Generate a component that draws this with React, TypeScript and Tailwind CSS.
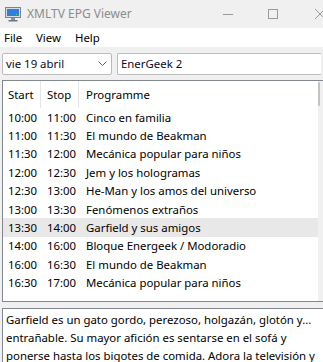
const rows = [
    ["10:00", "11:00", "Cinco en familia"],
    ["11:00", "11:30", "El mundo de Beakman"],
    ["11:30", "12:00", "Mecánica popular para niños"],
    ["12:00", "12:30", "Jem y los hologramas"],
    ["12:30", "13:00", "He-Man y los amos del universo"],
    ["13:00", "13:30", "Fenómenos extraños"],
    ["13:30", "14:00", "Garfield y sus amigos"],
    ["14:00", "16:00", "Bloque Energeek / Modoradio"],
    ["16:00", "16:30", "El mundo de Beakman"],
    ["16:30", "17:00", "Mecánica popular para niños"],
];

function MonitorIcon() {
    return (
        <svg width="16" height="16" viewBox="0 0 16 16">
            <rect x="0.5" y="1.5" width="15" height="10" fill="#d8dde3" stroke="#7a8591" />
            <rect x="2" y="3" width="12" height="7" fill="#2f7fe0" />
            <rect x="6" y="12" width="4" height="2" fill="#8a939c" />
            <rect x="3.5" y="14" width="9" height="1.5" fill="#6d7680" />
            <rect x="11" y="8" width="1" height="1" fill="#5fd35f" />
        </svg>
    );
}

export default function App() {
    const selected = 6;
    return (
        <div
            className="w-[323px] h-[362px] overflow-hidden bg-[#f0f0f0] text-[11.4px] text-black flex flex-col"
            style={{ fontFamily: '"Noto Sans", "Segoe UI", sans-serif' }}
        >
            {/* title bar */}
            <div className="h-[28px] flex items-center shrink-0">
                <div className="pl-[5px] pr-[6px] flex items-center">
                    <MonitorIcon />
                </div>
                <span className="text-[#8c8c8c] text-[12px]">XMLTV EPG Viewer</span>
                <div className="ml-auto mr-[-2px] flex items-center">
                    <div className="w-[10px] h-px bg-[#9a9a9a]" />
                    <div className="ml-[35px] w-[10px] h-[10px] border border-[#9a9a9a]" />
                    <svg className="ml-[37px]" width="10" height="10" viewBox="0 0 10 10">
                        <path d="M0 0 L10 10 M10 0 L0 10" stroke="#9a9a9a" strokeWidth="1" />
                    </svg>
                </div>
            </div>

            {/* menu */}
            <div className="h-[19px] bg-white flex items-center shrink-0">
                <span className="ml-[4px] w-[32px]">File</span>
                <span className="w-[39px]">View</span>
                <span>Help</span>
            </div>

            {/* combos */}
            <div className="flex gap-[5px] px-[2px] pt-[6px] pb-[5px] shrink-0">
                <div className="w-[110px] h-[22px] bg-white border border-[#bcbcbc] rounded-[2px] flex items-center pl-[3px] pr-[4px]">
                    <span className="text-[#0a0a28]">vie 19 abril</span>
                    <svg className="ml-auto" width="9" height="6" viewBox="0 0 9 6">
                        <path d="M0.5 0.5 L4.5 4.5 L8.5 0.5" fill="none" stroke="#606060" />
                    </svg>
                </div>
                <div className="flex-1 h-[22px] bg-white border border-[#bcbcbc] border-r-0 rounded-l-[2px] flex items-center pl-[3px]">
                    <span className="text-[#0a0a28]">EnerGeek 2</span>
                </div>
            </div>

            {/* list view */}
            <div className="ml-[2px] h-[222px] bg-white border border-[#828790] border-r-0 flex shrink-0">
                <div className="flex-1 flex flex-col">
                    <div className="h-[27px] flex items-center">
                        <div className="w-[38px] pl-[5px] h-full flex items-center border-r border-[#e5e5e5]">Start</div>
                        <div className="w-[38px] pl-[6px] h-full flex items-center border-r border-[#e5e5e5]">Stop</div>
                        <div className="pl-[7px]">Programme</div>
                    </div>
                    {rows.map((r, i) => (
                        <div
                            key={i}
                            className={`h-[18.4px] flex items-center ${i === selected ? "bg-[#e8e8e8]" : ""}`}
                        >
                            <div className="w-[38px] pl-[5px]">{r[0]}</div>
                            <div className="w-[38px] pl-[6px]">{r[1]}</div>
                            <div className="pl-[7px] whitespace-nowrap">{r[2]}</div>
                        </div>
                    ))}
                </div>
                <div className="w-[5px] bg-[#f0f0f0] flex pt-[1px]">
                    <div className="w-[2px] h-[24px] bg-[#c2c2c2] rounded-full" />
                </div>
            </div>

            {/* description */}
            <div className="ml-[2px] mt-[6px] flex-1 bg-white border border-[#828790] border-r-0 border-b-0 pl-[3px] pt-[2px] leading-[18px] whitespace-nowrap overflow-hidden">
                Garfield es un gato gordo, perezoso, holgazán, glotón y...
                <br />
                entrañable. Su mayor afición es sentarse en el sofá y
                <br />
                ponerse hasta los bigotes de comida. Adora la televisión y
            </div>
        </div>
    );
}
